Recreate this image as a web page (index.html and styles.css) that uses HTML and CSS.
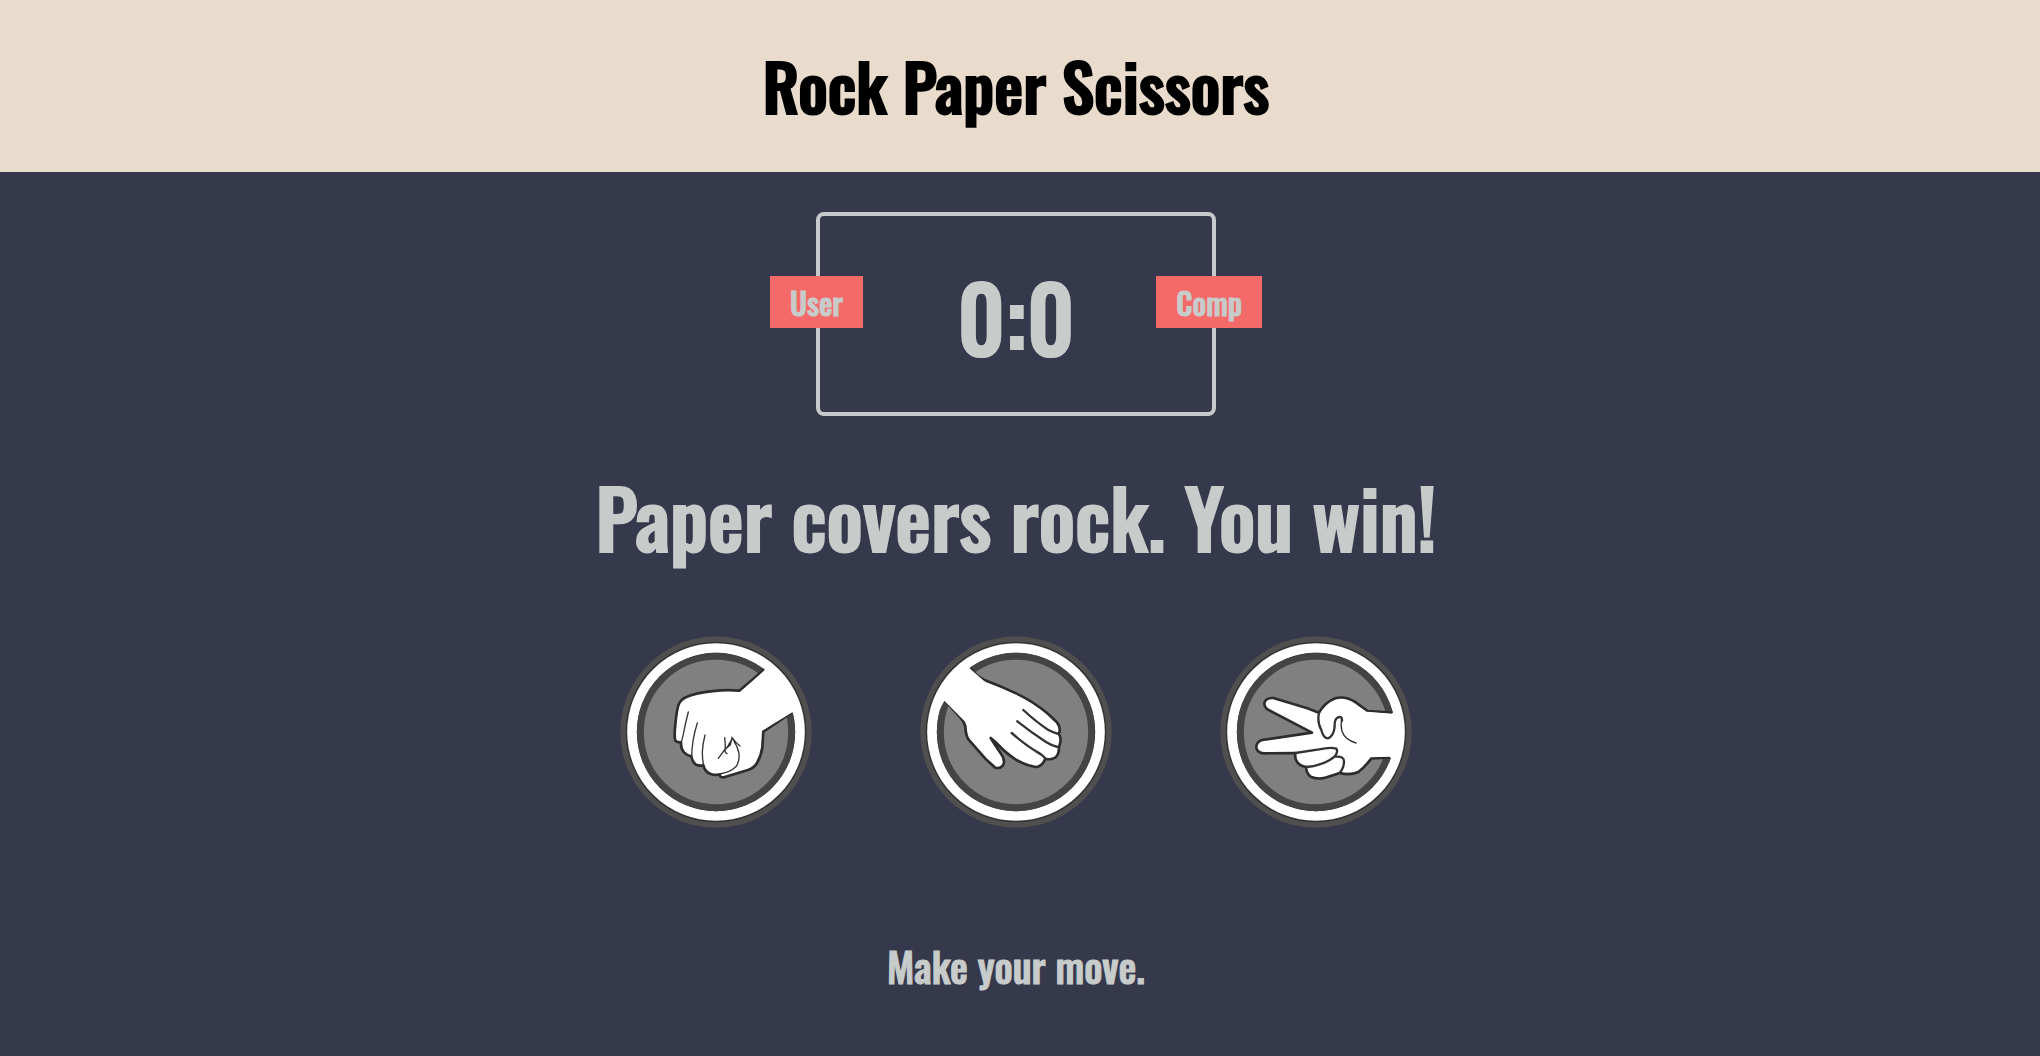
FILE: index.html
```html
<!DOCTYPE html>
<html lang="en">
<head>
<meta charset="utf-8">
<meta name="viewport" content="width=device-width, initial-scale=1">
<title>Rock Paper Scissors</title>
<link rel="stylesheet" href="styles.css">
</head>
<body>
<header class="header"><h1 class="title">Rock Paper Scissors</h1></header>
<main class="game">
  <section class="score-board" aria-label="Score">
    <div class="badge badge-user">User</div>
    <div class="badge badge-comp">Comp</div>
    <p class="score"><span>0</span>:<span>0</span></p>
  </section>
  <p class="result">Paper covers rock. You win!</p>
  <div class="choices">
    <button class="choice" type="button" aria-label="Rock">
      <svg class="icon" viewBox="30 18 576 576" aria-hidden="true">
        <circle class="rim" cx="318" cy="306" r="287"/>
        <circle class="band-edge" cx="318" cy="306" r="252"/>
        <circle class="band" cx="318" cy="306" r="252"/>
        <circle class="disc" cx="318" cy="306" r="227"/>
        <path class="hand" d="M462 119L388 182Q330 176 260 191Q217 201 208 219Q200 235 196 285Q192 318 196 332Q203 338 213 337Q212 356 222 367Q232 377 244 379Q248 397 257 403Q267 409 280 406Q285 426 302 432Q317 437 329 433Q330 444 342 442L414 420Q433 414 441 399Q453 379 457 352L460 305L549 245"/>
        <path class="skin" d="M462 122L395 182L460 300L547 247Q562 275 568 290Q570 170 475 105Z"/>
        <path class="crease" d="M235 246Q226 281 222 303Q218 323 214 337M262 279Q253 307 249 333Q245 360 245 379M285 315Q278 342 277 366Q277 390 281 405M329 432Q360 428 379 409Q389 393 387 371Q384 351 371 332M390 348Q376 337 366 323L361 345L344 359L325 385M344 323Q347 347 345 365L351 371M345 360Q354 350 363 332"/>
      </svg>
    </button>
    <button class="choice" type="button" aria-label="Paper">
      <svg class="icon" viewBox="30 18 576 576" aria-hidden="true">
        <circle class="rim" cx="318" cy="306" r="287"/>
        <circle class="band-edge" cx="318" cy="306" r="252"/>
        <circle class="band" cx="318" cy="306" r="252"/>
        <circle class="disc" cx="318" cy="306" r="227"/>
        <path class="hand" d="M182 114Q196 137 225 151Q273 169 318 190Q369 214 412 250L440 276Q455 293 446 312Q457 325 447 350Q448 371 437 382Q423 391 406 386Q396 411 376 411Q345 405 319 390Q284 366 268 348Q256 334 242 324Q255 345 274 373Q287 391 279 406Q270 417 256 413L226 386L176 329Q167 316 166 289Q162 273 150 261L103 209"/>
        <path class="skin" d="M181 117L230 160L170 280L103 212Q84 245 72 275Q72 160 165 99Z"/>
        <path class="crease bold" d="M340 240Q380 277 414 299Q430 308 446 312M322 274Q365 308 408 336Q427 348 443 351M305 309Q344 343 378 364Q398 374 406 386"/>
      </svg>
    </button>
    <button class="choice" type="button" aria-label="Scissors">
      <svg class="icon" viewBox="30 18 576 576" aria-hidden="true">
        <circle class="rim" cx="318" cy="306" r="287"/>
        <circle class="band-edge" cx="318" cy="306" r="252"/>
        <circle class="band" cx="318" cy="306" r="252"/>
        <circle class="disc" cx="318" cy="306" r="227"/>
        <path class="hand" d="M547 248L473 243L434 215Q404 197 376 205Q346 216 327 248L292 235L190 204Q168 203 163 219Q163 232 174 239L306 308L156 330Q138 336 139 353Q142 369 164 370L256 369Q253 390 268 403Q276 409 288 411Q289 430 302 440Q324 449 345 443Q370 436 389 429Q420 437 445 426Q464 412 484 385L542 382"/>
        <path class="skin" d="M545 251L470 245L480 382L539 380Q550 395 557 391Q590 320 557 243Z"/>
        <path class="crease bold" d="M327 248Q321 278 334 300Q340 325 354 325Q371 319 374 290Q373 266 384 262Q397 258 396 272M256 369L327 358Q363 350 379 356Q386 367 372 381Q340 407 288 411M377 380Q402 378 402 394Q402 414 389 429"/>
        <path class="crease" d="M396 264Q391 285 396 304Q405 330 438 339"/>
      </svg>
    </button>
  </div>
  <p class="prompt">Make your move.</p>
</main>
</body>
</html>
```
FILE: styles.css
```css
* {
  box-sizing: border-box;
  margin: 0;
  padding: 0;
}

body {
  min-height: 100vh;
  background: #36394c;
  color: #c7cccb;
  font-family: Oswald, "Liberation Sans Narrow", "Arial Narrow", "Liberation Sans", sans-serif;
  font-weight: 500;
  text-align: center;
  -webkit-text-stroke: 1px currentColor;
}

.header {
  padding: 35px 8px 37px 0;
  background: #e9dccc;
  color: #000;
}

.title {
  font-size: 65px;
  font-weight: 500;
  line-height: 100px;
  -webkit-text-stroke: 2px currentColor;
}

.game {
  display: flex;
  flex-direction: column;
  align-items: center;
  padding: 40px 8px 40px 0;
}

.score-board {
  position: relative;
  width: 400px;
  padding: 48px 20px 44px;
  border: 4px solid #c7cccb;
  border-radius: 8px;
}

.score {
  font-size: 90px;
  font-weight: 500;
  line-height: 104px;
  -webkit-text-stroke: 2px currentColor;
}

.badge {
  position: absolute;
  top: 60px;
  padding: 7px 20px 5px;
  background: #f46a68;
  font-size: 30px;
  line-height: 40px;
}

.badge-user {
  left: -50px;
}

.badge-comp {
  right: -50px;
}

.result {
  margin: 30px 0 50px;
  font-size: 80px;
  line-height: 140px;
  -webkit-text-stroke: 2px currentColor;
}

.choices {
  display: flex;
  justify-content: center;
  gap: 108px;
}

.choice {
  border: 0;
  border-radius: 50%;
  background: none;
  cursor: pointer;
}

.icon {
  display: block;
  width: 192px;
  height: 192px;
}

.rim {
  fill: #4f4f4f;
}

.band-edge {
  fill: #444;
  stroke: #333;
  stroke-width: 38px;
}

.band {
  fill: #444;
  stroke: #fff;
  stroke-width: 29px;
}

.disc {
  fill: #808080;
  stroke: #444;
  stroke-width: 21px;
}

.hand {
  fill: #fff;
  stroke: #2c2c2c;
  stroke-width: 8px;
  stroke-linejoin: round;
}

.skin {
  fill: #fff;
}

.crease {
  fill: none;
  stroke: #333;
  stroke-width: 4px;
  stroke-linecap: round;
}

.bold {
  stroke-width: 7px;
}

.prompt {
  margin-top: 108px;
  font-size: 40px;
  line-height: 60px;
}
```
